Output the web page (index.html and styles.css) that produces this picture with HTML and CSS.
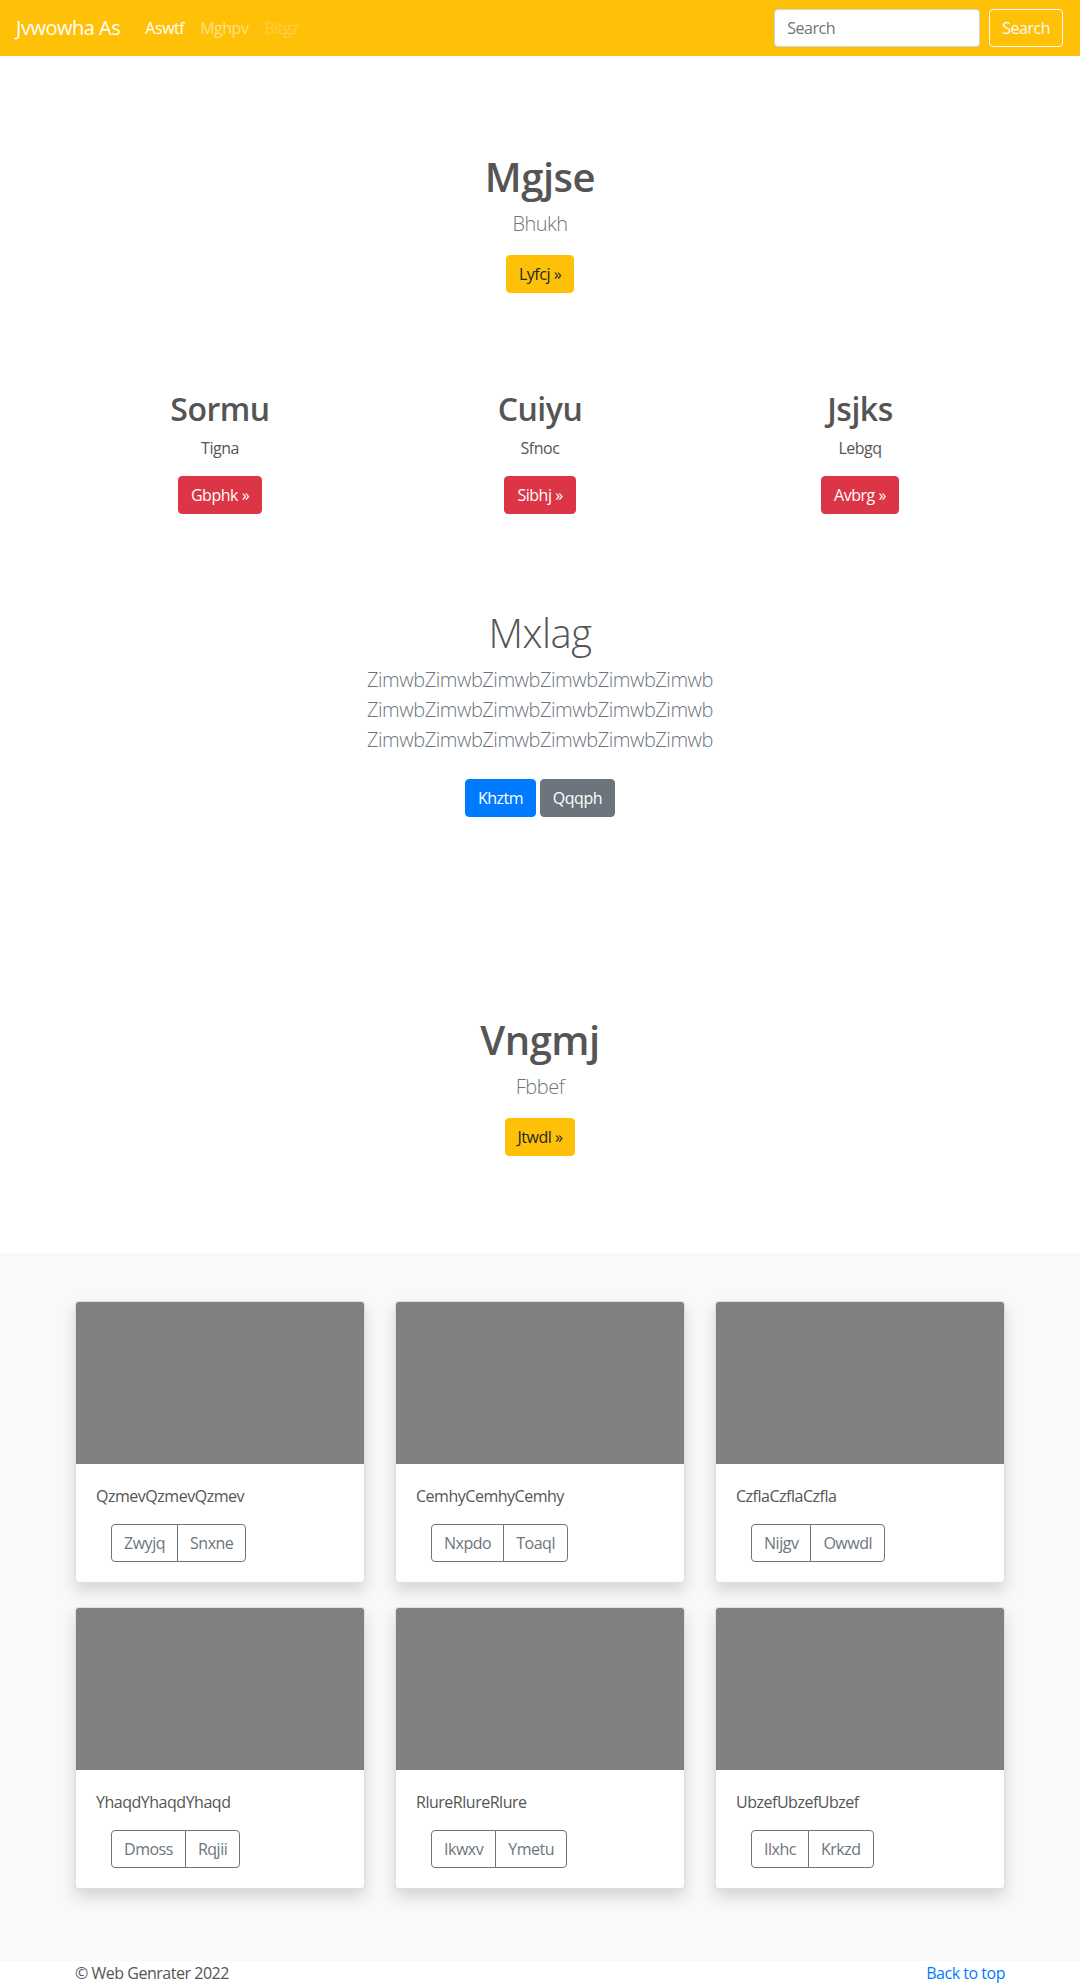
FILE: index.html
```html
<!DOCTYPE html>
<html lang="en">
<head>
<meta charset="utf-8">
<title>Jvwowha As</title>
<link rel="stylesheet" href="styles.css">
</head>
<body>
<nav class="navbar">
  <a class="brand" href="#">Jvwowha As</a>
  <ul class="nav">
    <li><a class="nav-link active" href="#">Aswtf</a></li>
    <li><a class="nav-link" href="#">Mghpv</a></li>
    <li><a class="nav-link disabled" href="#">Bitgz</a></li>
  </ul>
  <form class="search">
    <input class="search-input" type="text" placeholder="Search">
    <button class="btn btn-outline-light" type="button">Search</button>
  </form>
</nav>

<main>
  <section class="hero hero-top">
    <h1 class="heading">Mgjse</h1>
    <p class="lead">Bhukh</p>
    <a class="btn btn-warning" href="#">Lyfcj »</a>
  </section>

  <section class="features">
    <div class="feature">
      <h2 class="feature-title">Sormu</h2>
      <p class="feature-text">Tigna</p>
      <a class="btn btn-danger" href="#">Gbphk »</a>
    </div>
    <div class="feature">
      <h2 class="feature-title">Cuiyu</h2>
      <p class="feature-text">Sfnoc</p>
      <a class="btn btn-danger" href="#">Sibhj »</a>
    </div>
    <div class="feature">
      <h2 class="feature-title">Jsjks</h2>
      <p class="feature-text">Lebgq</p>
      <a class="btn btn-danger" href="#">Avbrg »</a>
    </div>
  </section>

  <section class="intro">
    <h1 class="heading heading-light">Mxlag</h1>
    <p class="lead">ZimwbZimwbZimwbZimwbZimwbZimwb<br>ZimwbZimwbZimwbZimwbZimwbZimwb<br>ZimwbZimwbZimwbZimwbZimwbZimwb</p>
    <p class="intro-actions">
      <a class="btn btn-primary" href="#">Khztm</a>
      <a class="btn btn-secondary" href="#">Qqqph</a>
    </p>
  </section>

  <section class="hero hero-bottom">
    <h1 class="heading">Vngmj</h1>
    <p class="lead">Fbbef</p>
    <a class="btn btn-warning" href="#">Jtwdl »</a>
  </section>

  <section class="album">
    <div class="album-grid">
      <div class="card">
        <div class="card-img"></div>
        <div class="card-body">
          <p class="card-text">QzmevQzmevQzmev</p>
          <div class="btn-group"><a class="btn btn-outline-secondary" href="#">Zwyjq</a><a class="btn btn-outline-secondary" href="#">Snxne</a></div>
        </div>
      </div>
      <div class="card">
        <div class="card-img"></div>
        <div class="card-body">
          <p class="card-text">CemhyCemhyCemhy</p>
          <div class="btn-group"><a class="btn btn-outline-secondary" href="#">Nxpdo</a><a class="btn btn-outline-secondary" href="#">Toaql</a></div>
        </div>
      </div>
      <div class="card">
        <div class="card-img"></div>
        <div class="card-body">
          <p class="card-text">CzflaCzflaCzfla</p>
          <div class="btn-group"><a class="btn btn-outline-secondary" href="#">Nijgv</a><a class="btn btn-outline-secondary" href="#">Owwdl</a></div>
        </div>
      </div>
      <div class="card">
        <div class="card-img"></div>
        <div class="card-body">
          <p class="card-text">YhaqdYhaqdYhaqd</p>
          <div class="btn-group"><a class="btn btn-outline-secondary" href="#">Dmoss</a><a class="btn btn-outline-secondary" href="#">Rqjii</a></div>
        </div>
      </div>
      <div class="card">
        <div class="card-img"></div>
        <div class="card-body">
          <p class="card-text">RlureRlureRlure</p>
          <div class="btn-group"><a class="btn btn-outline-secondary" href="#">Ikwxv</a><a class="btn btn-outline-secondary" href="#">Ymetu</a></div>
        </div>
      </div>
      <div class="card">
        <div class="card-img"></div>
        <div class="card-body">
          <p class="card-text">UbzefUbzefUbzef</p>
          <div class="btn-group"><a class="btn btn-outline-secondary" href="#">Ilxhc</a><a class="btn btn-outline-secondary" href="#">Krkzd</a></div>
        </div>
      </div>
    </div>
  </section>
</main>

<footer class="footer">
  <p class="copyright">© Web Genrater 2022</p>
  <a class="back-top" href="#">Back to top</a>
</footer>
</body>
</html>
```

FILE: styles.css
```css
* { box-sizing: border-box; }

html, body {
  margin: 0;
  padding: 0;
}

body {
  font-family: "Open Sans", "Noto Sans", "Liberation Sans", sans-serif;
  font-size: 16px;
  line-height: 1.5;
  letter-spacing: -0.03em;
  color: #555;
  background: #fff;
}

a { text-decoration: none; }

/* Navbar */
.navbar {
  height: 56px;
  background: #ffc107;
  display: flex;
  align-items: center;
  padding: 0 17px 0 16px;
}

.brand {
  color: #fff;
  font-size: 20px;
  line-height: 30px;
  margin-right: 17px;
}

.nav {
  list-style: none;
  margin: 0;
  padding: 0;
  display: flex;
  flex: 1;
}

.nav-link {
  display: block;
  padding: 0 8px;
  color: rgba(255, 255, 255, 0.5);
}

.nav-link.active { color: #fff; }
.nav-link.disabled { color: rgba(255, 255, 255, 0.25); }

.search {
  display: flex;
  align-items: center;
  margin: 0;
}

.search-input {
  width: 206px;
  height: 38px;
  padding: 6px 12px;
  font: inherit;
  letter-spacing: inherit;
  color: #495057;
  border: 1px solid #ced4da;
  border-radius: 4px;
  margin-right: 9px;
  background: #fff;
}

.search-input::placeholder { color: #6c757d; }

/* Buttons */
.btn {
  display: inline-block;
  font-family: inherit;
  font-size: 16px;
  letter-spacing: inherit;
  line-height: 24px;
  padding: 6px 12px;
  border: 1px solid transparent;
  border-radius: 4px;
  text-align: center;
  vertical-align: middle;
  cursor: pointer;
}

.btn-outline-light {
  background: transparent;
  color: #f8f9fa;
  border-color: #f8f9fa;
}

.btn-warning { background: #ffc107; border-color: #ffc107; color: #212529; }
.btn-danger { background: #dc3545; border-color: #dc3545; color: #fff; }
.btn-primary { background: #007bff; border-color: #007bff; color: #fff; }
.btn-secondary { background: #6c757d; border-color: #6c757d; color: #fff; }
.btn-outline-secondary { background: transparent; border-color: #6c757d; color: #6c757d; }

/* Headings */
.heading {
  font-size: 40px;
  line-height: 1.2;
  font-weight: 600;
  margin: 0 0 8px;
  color: #555;
}

.heading-light { font-weight: 300; }

.lead {
  font-size: 20px;
  font-weight: 300;
  line-height: 30px;
  color: #6c757d;
  margin: 0 0 16px;
}

/* Sections */
.hero { text-align: center; }
.hero-top { padding: 97px 0 97px; }
.hero-bottom { padding: 96px 0 97px; }

.features {
  max-width: 960px;
  margin: 0 auto;
  padding: 0 15px 95px;
  display: grid;
  grid-template-columns: repeat(3, 1fr);
  column-gap: 30px;
  text-align: center;
}

.feature-title {
  font-size: 32px;
  line-height: 1.2;
  font-weight: 600;
  margin: 0 0 8px;
  color: #555;
}

.feature-text { margin: 0 0 16px; }

.intro {
  text-align: center;
  padding-bottom: 95px;
}

.intro-actions { margin: 0; }
.intro-actions .btn { margin: 8px 0; }

/* Album */
.album {
  background: #f8f9fa;
  padding: 48px 0;
}

.album-grid {
  max-width: 960px;
  margin: 0 auto;
  padding: 0 15px;
  display: grid;
  grid-template-columns: repeat(3, 1fr);
  column-gap: 30px;
}

.card {
  background: #fff;
  border: 1px solid rgba(0, 0, 0, 0.125);
  border-radius: 4px;
  box-shadow: 0 8px 16px rgba(0, 0, 0, 0.15);
  margin-bottom: 24px;
  overflow: hidden;
}

.card-img {
  height: 162px;
  background: #808080;
}

.card-body { padding: 20px; }

.card-text { margin: 0 0 16px; }

.btn-group {
  display: inline-flex;
  margin-left: 15px;
}

.btn-group .btn:first-child {
  border-top-right-radius: 0;
  border-bottom-right-radius: 0;
}

.btn-group .btn + .btn {
  margin-left: -1px;
  border-top-left-radius: 0;
  border-bottom-left-radius: 0;
}

/* Footer */
.footer {
  max-width: 960px;
  margin: 0 auto;
  padding: 0 15px;
  display: flex;
  justify-content: space-between;
  color: #555;
}

.copyright { margin: 0; }
.back-top { color: #007bff; }
```
